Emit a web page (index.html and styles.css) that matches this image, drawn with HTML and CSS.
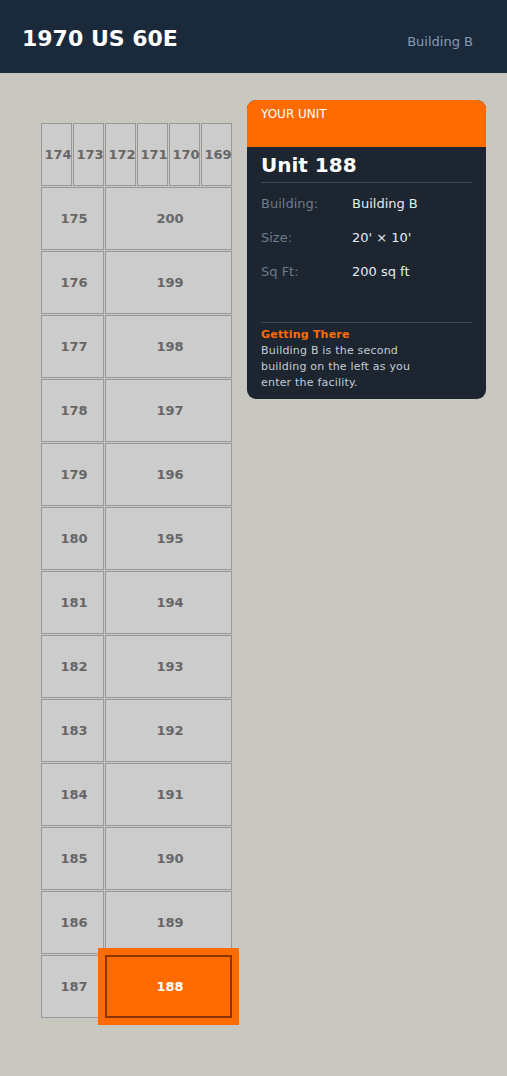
FILE: index.html
```html
<!DOCTYPE html>
<html>
<head>
<meta charset="utf-8">
<link rel="stylesheet" href="styles.css">
</head>
<body>
<header class="topbar">
  <h1 class="title">1970 US 60E</h1>
  <span class="building">Building B</span>
</header>
<main class="main">
  <div class="map">
    <div class="cell">174</div>
    <div class="cell">173</div>
    <div class="cell">172</div>
    <div class="cell">171</div>
    <div class="cell">170</div>
    <div class="cell">169</div>
    <div class="cell left">175</div><div class="cell right">200</div>
    <div class="cell left">176</div><div class="cell right">199</div>
    <div class="cell left">177</div><div class="cell right">198</div>
    <div class="cell left">178</div><div class="cell right">197</div>
    <div class="cell left">179</div><div class="cell right">196</div>
    <div class="cell left">180</div><div class="cell right">195</div>
    <div class="cell left">181</div><div class="cell right">194</div>
    <div class="cell left">182</div><div class="cell right">193</div>
    <div class="cell left">183</div><div class="cell right">192</div>
    <div class="cell left">184</div><div class="cell right">191</div>
    <div class="cell left">185</div><div class="cell right">190</div>
    <div class="cell left">186</div><div class="cell right">189</div>
    <div class="cell left">187</div><div class="cell right selected">188</div>
  </div>
  <aside class="panel">
    <div class="panel-head">YOUR UNIT</div>
    <div class="panel-body">
      <h2 class="unit-name">Unit 188</h2>
      <div class="info">
        <div class="row"><span class="label">Building:</span><span class="value">Building B</span></div>
        <div class="row"><span class="label">Size:</span><span class="value">20' × 10'</span></div>
        <div class="row"><span class="label">Sq Ft:</span><span class="value">200 sq ft</span></div>
      </div>
      <div class="directions">
        <div class="dir-title">Getting There</div>
        <p class="dir-text">Building B is the second building on the left as you enter the facility.</p>
      </div>
    </div>
  </aside>
</main>
</body>
</html>
```
FILE: styles.css
```css
html, body {
  margin: 0;
  padding: 0;
}
body {
  background: #c8c8c0;
  font-family: "DejaVu Sans", sans-serif;
  height: 1076px;
}
.topbar {
  height: 73px;
  box-sizing: border-box;
  background: #1b2a3b;
  display: flex;
  align-items: baseline;
  justify-content: space-between;
  padding: 0 34px 0 22px;
}
.title {
  margin: 0;
  font-size: 22px;
  font-weight: bold;
  color: #ffffff;
  line-height: 77px;
}
.building {
  font-size: 13px;
  color: #8a9bb0;
}
.main {
  display: flex;
  align-items: flex-start;
  padding: 27px 0 0 41px;
  gap: 15px;
}
.map {
  margin-top: 23px;
  display: grid;
  grid-template-columns: repeat(6, 31px);
  grid-auto-rows: 63px;
  gap: 1px;
}
.cell {
  box-sizing: border-box;
  background: #cccccc;
  border: 1px solid #999999;
  color: #666666;
  font-size: 13px;
  font-weight: bold;
  display: flex;
  align-items: center;
  justify-content: center;
  padding-left: 3px;
  padding-bottom: 1px;
  white-space: nowrap;
  overflow: visible;
}
.cell.left {
  grid-column: span 2;
}
.cell.right {
  grid-column: span 4;
}
.cell.selected {
  background: #ff6b00;
  border: 2px solid #8b3400;
  color: #ffffff;
  box-shadow: 0 0 0 7px #ff6b00;
  position: relative;
  z-index: 1;
}
.panel {
  width: 239px;
  border-radius: 9px;
  overflow: hidden;
  background: #1c2530;
}
.panel-head {
  height: 47px;
  box-sizing: border-box;
  background: #ff6b00;
  color: #ffffff;
  font-size: 12px;
  line-height: 14px;
  padding: 7px 14px 0;
}
.panel-body {
  padding: 0 14px 8px;
}
.unit-name {
  margin: 0;
  padding: 6px 0 5px;
  font-size: 20px;
  line-height: 24px;
  font-weight: bold;
  color: #ffffff;
  border-bottom: 1px solid #3a4858;
}
.info {
  padding-top: 3px;
  padding-bottom: 34px;
}
.row {
  display: flex;
  height: 34px;
  align-items: center;
  font-size: 13px;
}
.label {
  width: 91px;
  color: #6b7c8e;
}
.value {
  color: #e8ecef;
}
.directions {
  border-top: 1px solid #3a4858;
  padding-top: 4px;
}
.dir-title {
  color: #ff6b00;
  font-weight: bold;
  font-size: 11px;
  line-height: 16px;
  letter-spacing: 0.2px;
}
.dir-text {
  margin: 0;
  max-width: 165px;
  color: #c5ccd4;
  font-size: 11px;
  line-height: 16px;
  letter-spacing: 0.2px;
}
```
